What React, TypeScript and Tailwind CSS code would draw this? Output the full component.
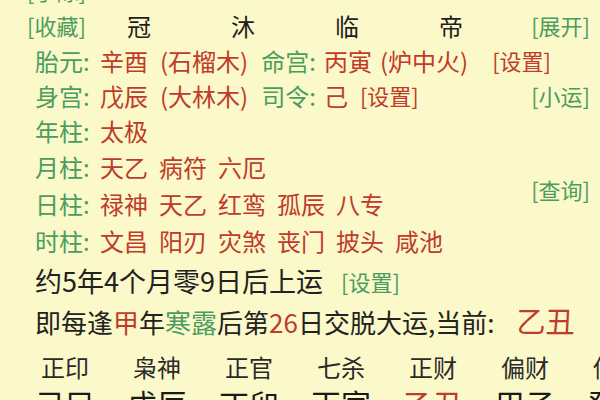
import React from "react";

const GREEN = "text-[#4a9d5f]";
const RED = "text-[#bf3b2b]";

const header = ["冠", "沐", "临", "帝"];

const pillars = [
  { label: "年柱", items: ["太极"] },
  { label: "月柱", items: ["天乙", "病符", "六厄"] },
  { label: "日柱", items: ["禄神", "天乙", "红鸾", "孤辰", "八专"], side: "[查询]" },
  { label: "时柱", items: ["文昌", "阳刃", "灾煞", "丧门", "披头", "咸池"] },
];

const gods = ["正印", "枭神", "正官", "七杀", "正财", "偏财", "伤官"];
const yun = [
  { name: "己巳" },
  { name: "戊辰" },
  { name: "丁卯" },
  { name: "丙寅" },
  { name: "乙丑", current: true },
  { name: "甲子" },
  { name: "癸亥" },
];

export default function App() {
  return (
    <div
      className="w-[600px] h-[400px] overflow-hidden bg-[#fbf8c9] text-[#222]"
      style={{ fontFamily: '"Noto Sans CJK SC", "Noto Sans", sans-serif' }}
    >
      {/* 顶部被截断的一行 */}
      <div className={`mt-[-27px] h-[35px] flex items-center pl-[27px] text-[22px] ${GREEN}`}>
        [手除]
      </div>

      {/* 十二长生 */}
      <div className="h-[35px] flex items-center pl-[27px] pr-[10px] text-[22px]">
        <span className={`w-[60px] ${GREEN}`}>[收藏]</span>
        {header.map(h => (
          <span key={h} className="w-[104px] text-center text-[24px] text-[#1e1e1e]">
            {h}
          </span>
        ))}
        <span className={`ml-auto ${GREEN}`}>[展开]</span>
      </div>

      {/* 胎元 / 命宫 */}
      <div className="h-[35px] flex items-center pl-[35px] pr-[10px] text-[24px] whitespace-nowrap">
        <span className={`w-[65px] ${GREEN}`}>胎元:</span>
        <span className={RED}>辛酉</span>
        <span className={`ml-[12px] ${RED}`}>(石榴木)</span>
        <span className={`ml-[13px] ${GREEN}`}>命宫:</span>
        <span className={`ml-[8px] ${RED}`}>丙寅</span>
        <span className={`ml-[8px] ${RED}`}>(炉中火)</span>
        <span className={`ml-[24px] text-[22px] ${RED}`}>[设置]</span>
      </div>

      {/* 身宫 / 司令 */}
      <div className="h-[35px] flex items-center pl-[35px] pr-[10px] text-[24px] whitespace-nowrap">
        <span className={`w-[65px] ${GREEN}`}>身宫:</span>
        <span className={RED}>戊辰</span>
        <span className={`ml-[12px] ${RED}`}>(大林木)</span>
        <span className={`ml-[13px] ${GREEN}`}>司令:</span>
        <span className={`ml-[8px] ${RED}`}>己</span>
        <span className={`ml-[12px] text-[22px] ${RED}`}>[设置]</span>
        <span className={`ml-auto text-[22px] ${GREEN}`}>[小运]</span>
      </div>

      {/* 四柱神煞 */}
      {pillars.map((p, idx) => (
        <div
          key={p.label}
          className={`${idx === 0 ? "h-[35px]" : "h-[37px]"} flex items-center pl-[35px] pr-[10px] text-[24px]`}
        >
          <span className={`w-[65px] ${GREEN}`}>{p.label}:</span>
          <div className="flex gap-[11px]">
            {p.items.map((it, i) => (
              <span key={i} className={RED}>
                {it}
              </span>
            ))}
          </div>
          {p.side && (
            <span className={`ml-auto self-start mt-[-8px] leading-[24px] text-[22px] ${GREEN}`}>
              {p.side}
            </span>
          )}
        </div>
      ))}

      {/* 起运 */}
      <div className="mt-[4px] h-[36px] flex items-center pl-[35px] text-[27px] whitespace-nowrap">
        <span>约5年4个月零9日后上运</span>
        <span className={`ml-[18px] text-[22px] ${GREEN}`}>[设置]</span>
      </div>

      <div className="mt-[4px] h-[36px] flex items-center pl-[35px] text-[26px] whitespace-nowrap">
        <span>即每逢</span>
        <span className={RED}>甲</span>
        <span>年</span>
        <span className={GREEN}>寒露</span>
        <span>后第</span>
        <span className={RED}>26</span>
        <span>日交脱大运,当前:</span>
        <span className={`ml-[22px] text-[29px] ${RED}`}>乙丑</span>
      </div>

      {/* 大运十神 */}
      <div className="mt-[10px] h-[36px] flex items-center pl-[19px] text-[24px] leading-none whitespace-nowrap">
        {gods.map(g => (
          <span key={g} className="w-[92px] shrink-0 text-center text-[#2a2a2a]">
            {g}
          </span>
        ))}
      </div>

      <div className="h-[36px] flex items-center pl-[19px] text-[30px] leading-none whitespace-nowrap">
        {yun.map(y => (
          <span
            key={y.name}
            className={`w-[92px] shrink-0 text-center ${y.current ? RED : "text-[#1a1a1a]"}`}
          >
            {y.name}
          </span>
        ))}
      </div>
    </div>
  );
}
